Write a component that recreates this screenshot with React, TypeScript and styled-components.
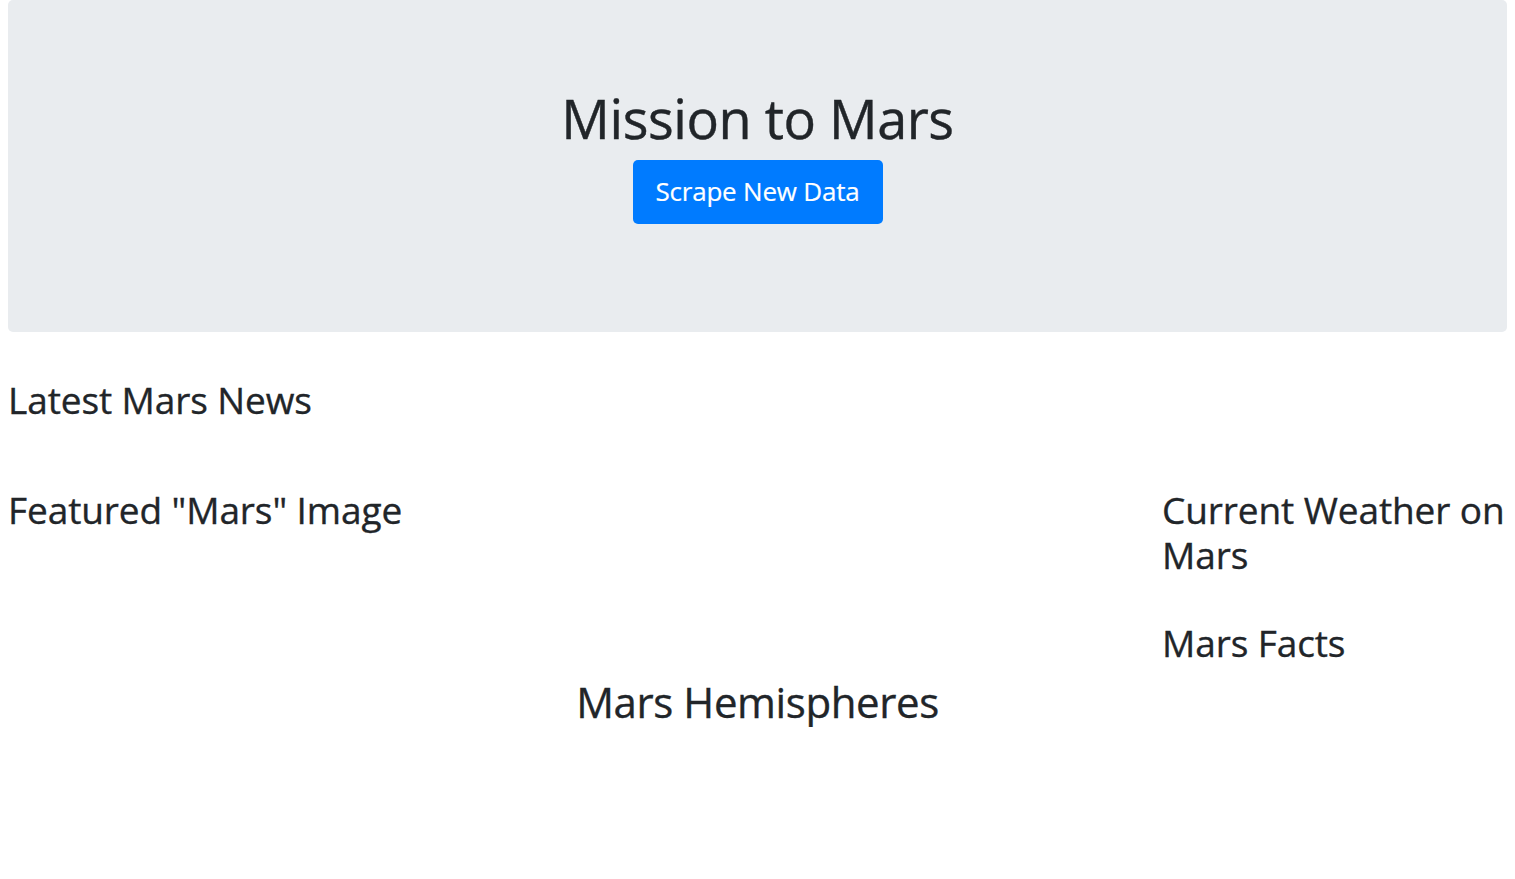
import React from "react";
import styled, { createGlobalStyle } from "styled-components";

const GlobalStyle = createGlobalStyle`
  html, body {
    margin: 0;
    padding: 0;
    background: #ffffff;
  }
  body {
    font-family: "Open Sans", "Noto Sans", sans-serif;
    color: #212529;
  }
  * { box-sizing: border-box; }
`;

const Page = styled.div`
  padding: 0 8px;
`;

const Jumbotron = styled.header`
  background: #e9ecef;
  border-radius: 5px;
  padding: 86px 32px 108px;
  display: flex;
  flex-direction: column;
  align-items: center;
`;

const Title = styled.h1`
  margin: 0 0 9px;
  font-size: 54px;
  line-height: 1.2;
  font-weight: 400;
  letter-spacing: -0.45px;
  -webkit-text-stroke: 0.4px #212529;
  text-align: center;
`;

const PrimaryButton = styled.button`
  display: inline-flex;
  align-items: center;
  justify-content: center;
  width: 250px;
  height: 64px;
  padding: 0 20px 2px;
  border: none;
  border-radius: 5px;
  background: #007bff;
  color: #ffffff;
  font-family: "Open Sans", "Noto Sans", sans-serif;
  font-size: 26px;
  font-weight: 400;
  letter-spacing: -0.2px;
  -webkit-text-stroke: 0.2px #ffffff;
  cursor: pointer;
`;

const Heading = styled.h3<{ $mt?: number }>`
  margin: ${(p) => p.$mt ?? 0}px 0 0;
  font-size: 37px;
  line-height: 45px;
  font-weight: 400;
  letter-spacing: -0.1px;
  -webkit-text-stroke: 0.35px #212529;
`;

const SectionTitle = styled.h2`
  margin: 12px 0 0;
  font-size: 42px;
  line-height: 1.2;
  font-weight: 400;
  letter-spacing: -0.4px;
  -webkit-text-stroke: 0.35px #212529;
  text-align: center;
`;

const Row = styled.section`
  display: flex;
  margin-top: 65px;
`;

const MainColumn = styled.div`
  flex: 1;
`;

const SideColumn = styled.aside`
  width: 345px;
  display: flex;
  flex-direction: column;
  gap: 43px;
`;

export default function App() {
  return (
    <>
      <GlobalStyle />
      <Page>
        <Jumbotron>
          <Title>Mission to Mars</Title>
          <PrimaryButton>Scrape New Data</PrimaryButton>
        </Jumbotron>
        <Heading $mt={45}>Latest Mars News</Heading>
        <Row>
          <MainColumn>
            <Heading>Featured "Mars" Image</Heading>
          </MainColumn>
          <SideColumn>
            <Heading>Current Weather on Mars</Heading>
            <Heading>Mars Facts</Heading>
          </SideColumn>
        </Row>
        <SectionTitle>Mars Hemispheres</SectionTitle>
      </Page>
    </>
  );
}
